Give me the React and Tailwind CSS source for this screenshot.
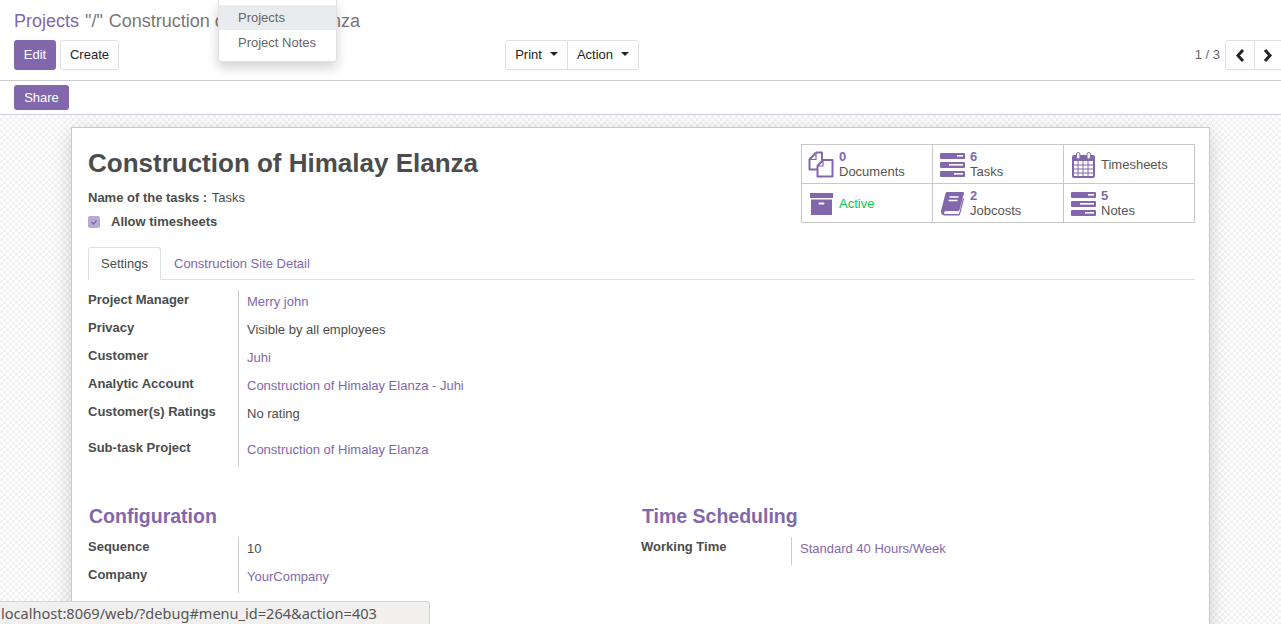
const IconFiles = () => (
  <svg width="26" height="27" viewBox="0 0 26 27" fill="none" stroke="#8267ac" strokeWidth="2" strokeLinejoin="round">
    <path d="M8 1.500h6v8" />
    <path d="M8 1.500l-6.500 7v10h8" />
    <path d="M8 2v6.500H2" strokeWidth="1.200" />
    <path d="M15 9h9.500v16.500h-15V15z" />
    <path d="M15 9.500V15H9.500" strokeWidth="1.200" />
  </svg>
);

const IconTasks = () => (
  <svg width="25" height="24" viewBox="0 0 25 24">
    <rect x="0" y="0" width="25" height="6" rx="1" fill="#8267ac" />
    <rect x="17" y="2" width="6" height="1.600" fill="#fff" />
    <rect x="0" y="9" width="25" height="6" rx="1" fill="#8267ac" />
    <rect x="9" y="11" width="14" height="1.600" fill="#fff" />
    <rect x="0" y="18" width="25" height="6" rx="1" fill="#8267ac" />
    <rect x="14" y="20" width="9" height="1.600" fill="#fff" />
  </svg>
);

const IconCalendar = () => (
  <svg width="23" height="26" viewBox="0 0 23 26">
    <path d="M2 3h19a2 2 0 0 1 2 2v19a2 2 0 0 1-2 2H2a2 2 0 0 1-2-2V5a2 2 0 0 1 2-2z" fill="#8267ac" />
    <rect x="2" y="9" width="19" height="15" fill="#fff" />
    <path d="M2 13h19M2 17h19M2 21h19M6 9v15M11 9v15M16 9v15" stroke="#8267ac" strokeWidth="1" />
    <rect x="4.500" y="0.500" width="3.400" height="6.500" rx="1.700" fill="#fff" stroke="#8267ac" />
    <rect x="15" y="0.500" width="3.400" height="6.500" rx="1.700" fill="#fff" stroke="#8267ac" />
  </svg>
);

const IconArchive = () => (
  <svg width="23" height="22" viewBox="0 0 23 22">
    <rect x="0" y="0" width="23" height="5" fill="#8267ac" />
    <rect x="1" y="6.500" width="21" height="15.500" fill="#8267ac" />
    <rect x="8.500" y="9.500" width="6" height="2" rx="1" fill="#fff" />
  </svg>
);

const IconBook = () => (
  <svg width="23" height="24" viewBox="0 0 23 24">
    <path d="M6 0h16a1 1 0 0 1 1 1l-4.500 17a1.500 1.500 0 0 1-1.500 1H5a2 2 0 0 0-2 2c0 .8.8 1 1.500 1H18l4-16 1 1-4 15.500a1.500 1.500 0 0 1-1.500 1H4a4 4 0 0 1-4-4c0-.8.2-1.500.4-2.200L4.500 1.500A2 2 0 0 1 6 0z" fill="#8267ac" />
    <path d="M8.500 5h9M7.500 8.500h9" stroke="#fff" strokeWidth="1.400" />
  </svg>
);

const Caret = () => (
  <span className="mb-[3px] border-x-[4px] border-t-[4px] border-x-transparent border-t-[#212529]" />
);

function StatButton({ icon, count, label, green }) {
  return (
    <div className="flex h-[39px] items-center border-r border-b border-[#c8c8c8] pt-px pl-[3px]">
      <div className="mr-[2px] flex w-[32px] flex-none items-center justify-center">{icon}</div>
      {count !== undefined ? (
        <div className="leading-[14px]">
          <div className="font-bold text-[#8267ac]">{count}</div>
          <div className="mt-px text-[#555]">{label}</div>
        </div>
      ) : (
        <div className={green ? "text-[#00c853]" : "text-[#555]"}>{label}</div>
      )}
    </div>
  );
}

function Field({ label, value, link, tall }) {
  return (
    <div className={`flex ${tall ? "h-[36px]" : "h-[28px]"}`}>
      <div className="w-[150px] flex-none pt-px pr-2 leading-[18px] font-bold text-[#4c4c4c]">{label}</div>
      <div
        className={`flex-1 border-l border-[#ccc] pt-[3px] pl-2 leading-[18px] ${
          link ? "text-[#8267ac]" : "text-[#4c4c4c]"
        }`}
      >
        {value}
      </div>
    </div>
  );
}

export default function App() {
  return (
    <div className="relative h-[624px] w-[1281px] overflow-hidden bg-white font-['Liberation_Sans',sans-serif] text-[13px] text-[#4c4c4c]">
      {/* control panel */}
      <div className="h-[81px] border-b border-[#ccc] px-[14px] pt-[10px]">
        <div className="flex h-[30px] gap-[5px] pt-px text-[18px] leading-[21px] text-[#777]">
          <span className="text-[#8267ac]">Projects</span>
          <span className="ml-px">"/"</span>
          <span className="ml-px">Construction of Himalay Elanza</span>
        </div>
        <div className="flex h-[30px] items-stretch">
          <div className="flex w-[491px] flex-none gap-1">
            <button className="w-[42px] rounded-[3px] bg-[#8267ac] text-white">Edit</button>
            <button className="w-[59px] rounded-[3px] border border-[#dee2e6] text-[#212529]">Create</button>
          </div>
          <div className="flex flex-none">
            <button className="flex w-[63px] items-center justify-center gap-[8px] rounded-l-[3px] border border-[#dee2e6] text-[#212529]">
              Print <Caret />
            </button>
            <button className="-ml-px flex w-[72px] items-center justify-center gap-[8px] rounded-r-[3px] border border-[#dee2e6] text-[#212529]">
              Action <Caret />
            </button>
          </div>
          <div className="-mr-[14px] flex flex-1 items-center justify-end">
            <span className="mr-[5px] text-[#666]">1 / 3</span>
            <button className="flex h-full w-[30px] items-center justify-center rounded-l-[3px] border border-[#dee2e6]">
              <svg width="10" height="13" viewBox="0 0 10 13" fill="none" stroke="#212529" strokeWidth="3">
                <path d="M8 1L3 6.500l5 5.500" />
              </svg>
            </button>
            <button className="-ml-px flex h-full w-[27px] items-center justify-center border-y border-l border-[#dee2e6]">
              <svg width="10" height="13" viewBox="0 0 10 13" fill="none" stroke="#212529" strokeWidth="3">
                <path d="M2 1l5 5.500L2 12" />
              </svg>
            </button>
          </div>
        </div>
      </div>
      <div className="h-[34px] border-b border-[#ccd] px-[14px] pt-[4px]">
        <button className="h-[25px] w-[55px] rounded-[3px] bg-[#8267ac] text-white">Share</button>
      </div>

      {/* form */}
      <div className="h-[509px] bg-[repeating-conic-gradient(#f2f2f2_0_25%,#fff_0_50%)] bg-[length:6px_6px] pt-[12px]">
        <div className="mx-auto h-[600px] w-[1139px] border border-[#c8c8d3] bg-white pt-4 pr-[14px] pl-4 shadow-[0_5px_20px_-1px_rgba(0,0,0,0.2)]">
          <div className="flex justify-between">
            <div>
              <h1 className="mt-[3px] text-[26px] leading-[32px] font-bold text-[#4c4c4c]">
                Construction of Himalay Elanza
              </h1>
              <div className="mt-[10px] leading-[18px]">
                <span className="font-bold">Name of the tasks :</span> <span className="ml-px">Tasks</span>
              </div>
              <div className="mt-[6px] flex items-center leading-[18px] font-bold">
                <span className="flex h-[12px] w-[12px] items-center justify-center rounded-[2px] bg-[#b8a9d6]">
                  <svg width="8" height="8" viewBox="0 0 8 8" fill="none" stroke="#8267ac" strokeWidth="1.500">
                    <path d="M1.500 4l2 2 3-3.500" />
                  </svg>
                </span>
                <span className="ml-[11px]">Allow timesheets</span>
              </div>
            </div>
            <div className="grid h-[79px] w-[394px] grid-cols-3 border-t border-l border-[#c8c8c8]">
              <StatButton icon={<IconFiles />} count={0} label="Documents" />
              <StatButton icon={<IconTasks />} count={6} label="Tasks" />
              <StatButton icon={<IconCalendar />} label="Timesheets" />
              <StatButton icon={<IconArchive />} label="Active" green />
              <StatButton icon={<IconBook />} count={2} label="Jobcosts" />
              <StatButton icon={<IconTasks />} count={5} label="Notes" />
            </div>
          </div>

          {/* tabs */}
          <div className="mt-[16px] flex h-[33px] border-b border-[#dee2e6]">
            <div className="h-[33px] w-[73px] rounded-t-[3px] border-x border-t border-[#dee2e6] bg-white pt-[8px] text-center leading-[16px]">
              Settings
            </div>
            <div className="ml-[13px] pt-[9px] leading-[16px] text-[#8267ac]">Construction Site Detail</div>
          </div>

          <div className="mt-[10px]">
            <Field label="Project Manager" value="Merry john" link />
            <Field label="Privacy" value="Visible by all employees" />
            <Field label="Customer" value="Juhi" link />
            <Field label="Analytic Account" value="Construction of Himalay Elanza - Juhi" link />
            <Field label="Customer(s) Ratings" value="No rating" tall />
            <Field label="Sub-task Project" value="Construction of Himalay Elanza" link />
          </div>

          <div className="mt-[36px] flex">
            <div className="w-[553px] flex-none">
              <h2 className="ml-px h-[35px] text-[19.5px] leading-[28px] font-bold text-[#8267ac]">Configuration</h2>
              <Field label="Sequence" value="10" />
              <Field label="Company" value="YourCompany" link />
            </div>
            <div className="flex-1">
              <h2 className="ml-px h-[35px] text-[19.5px] leading-[28px] font-bold text-[#8267ac]">Time Scheduling</h2>
              <Field label="Working Time" value="Standard 40 Hours/Week" link />
            </div>
          </div>
        </div>
      </div>

      {/* switcher menu */}
      <div className="absolute top-0 left-[218px] h-[62px] w-[119px] rounded-b-[3px] border-x border-b border-[#e2e2e2] bg-white pt-[5px] text-[#666] shadow-[0_6px_12px_rgba(0,0,0,0.175)]">
        <div className="h-[25px] bg-[#e9ecef] pl-[19px] leading-[25px]">Projects</div>
        <div className="h-[25px] pl-[19px] leading-[25px]">Project Notes</div>
      </div>

      {/* browser status bubble */}
      <div className="absolute bottom-0 left-0 h-[23px] w-[430px] rounded-tr-[4px] border-t border-r border-[#d4d4d4] bg-[#f1f0ee] pl-px font-['Noto_Sans',sans-serif] text-[14.55px] leading-[22px] text-[#555]">
        localhost:8069/web/?debug#menu_id=264&amp;action=403
      </div>
    </div>
  );
}
